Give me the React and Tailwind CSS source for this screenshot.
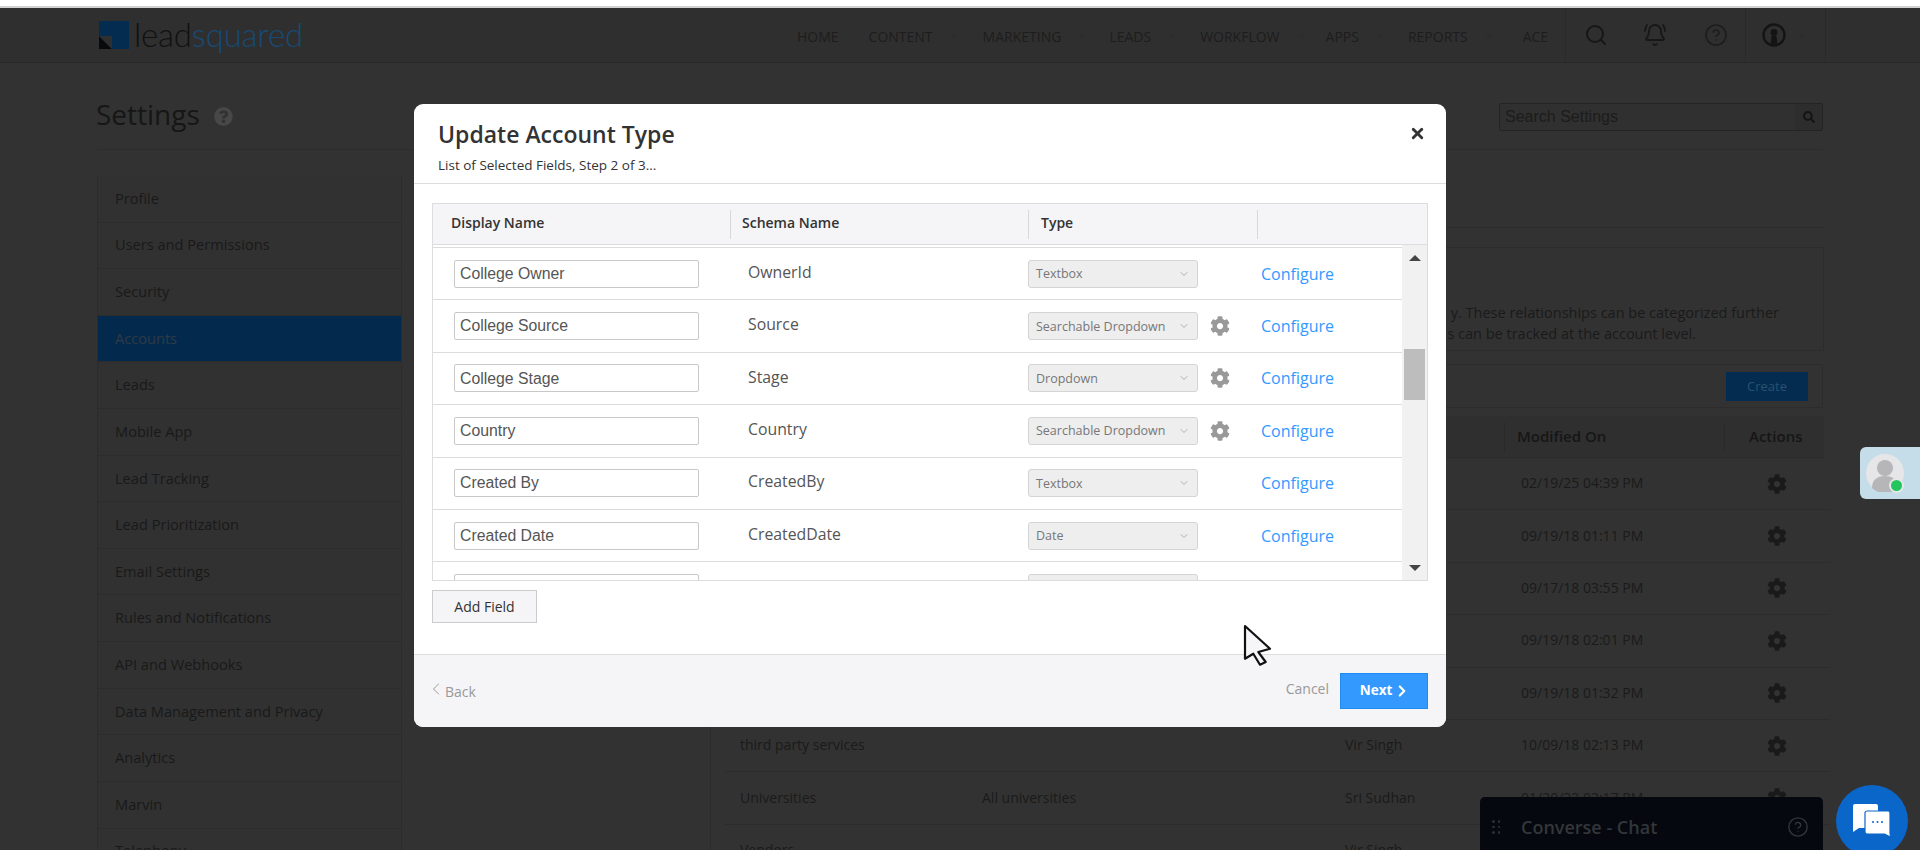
import React from "react";
import { ChevronDown, ChevronLeft, ChevronRight, BellRing, CircleHelp, Search, X } from "lucide-react";
import { FaCog, FaSearch, FaQuestionCircle } from "react-icons/fa";

const font = "font-['Open_Sans','Noto_Sans',sans-serif]";

const menu = ["Profile","Users and Permissions","Security","Accounts","Leads","Mobile App","Lead Tracking","Lead Prioritization","Email Settings","Rules and Notifications","API and Webhooks","Data Management and Privacy","Analytics","Marvin","Telephony"];

const nav = [
  { t: "HOME", ml: "ml-0", chev: false },
  { t: "CONTENT", ml: "ml-[30px]", chev: true },
  { t: "MARKETING", ml: "ml-[24px]", chev: true },
  { t: "LEADS", ml: "ml-[22px]", chev: true },
  { t: "WORKFLOW", ml: "ml-[23px]", chev: true },
  { t: "APPS", ml: "ml-[20px]", chev: true },
  { t: "REPORTS", ml: "ml-[23px]", chev: true },
  { t: "ACE", ml: "ml-[29px]", chev: false },
];

const rows = [
  { n: "College Owner", s: "OwnerId", ty: "Textbox", g: false },
  { n: "College Source", s: "Source", ty: "Searchable Dropdown", g: true },
  { n: "College Stage", s: "Stage", ty: "Dropdown", g: true },
  { n: "Country", s: "Country", ty: "Searchable Dropdown", g: true },
  { n: "Created By", s: "CreatedBy", ty: "Textbox", g: false },
  { n: "Created Date", s: "CreatedDate", ty: "Date", g: false },
  { n: "", s: "CreatedOn", ty: "", g: false },
];

const back = [
  { d: "02/19/25 04:39 PM" },
  { d: "09/19/18 01:11 PM" },
  { d: "09/17/18 03:55 PM" },
  { d: "09/19/18 02:01 PM" },
  { d: "09/19/18 01:32 PM" },
  { n: "third party services", o: "Vir Singh", d: "10/09/18 02:13 PM" },
  { n: "Universities", a: "All universities", o: "Sri Sudhan", d: "01/20/23 02:17 PM" },
  { n: "Vendors", o: "Vir Singh", d: "" },
];

function Row({ r }) {
  return (
    <div className="flex h-[52.4px] shrink-0 items-center border-b border-[#dcdcdc]">
      <div className="ml-[21px] flex h-[28px] w-[245px] shrink-0 items-center rounded-[2px] border border-[#c8c8c8] bg-white pl-[5px] font-['Liberation_Sans',sans-serif] text-[15.8px] text-[#555]">
        {r.n}
      </div>
      <div className="ml-[49px] w-[280px] shrink-0 -translate-y-[1px] text-[15.8px] text-[#555]">{r.s}</div>
      <div className="flex h-[28px] w-[170px] shrink-0 items-center justify-between rounded-[3px] border border-[#d4d4d4] bg-[#eeeeee] pl-[7px] pr-[7px] text-[12.5px] text-[#777]">
        <span className="translate-y-[1px]">{r.ty}</span>
        <ChevronDown size={12} className="text-[#b0b0b0]" />
      </div>
      <div className="ml-[12px] flex w-[20px] shrink-0 justify-center">
        {r.g && <FaCog size={20} className="text-[#999]" />}
      </div>
      <a className="ml-[31px] text-[16px] text-[#3399ff]">Configure</a>
    </div>
  );
}

export default function App() {
  return (
    <div className={`relative h-[850px] w-[1920px] overflow-hidden bg-white ${font}`}>
      <div className="h-[6px] bg-white" />
      <div className="h-[2px] bg-[#d2d2d2]" />

      <div className="h-[842px] overflow-hidden bg-[#323232]">
        {/* top nav */}
        <header className="flex h-[55px] items-center border-b border-[#282828] bg-[#2f2f2f] text-[#1d1d1d]">
          <div className="flex w-[797px] shrink-0 items-center pl-[99px]">
            <div className="relative h-[28px] w-[30px] bg-[#042c50]">
              <svg viewBox="0 0 30 28" className="absolute inset-0 h-full w-full">
                <polygon points="0,15 13,28 0,28" fill="#0a0a0a" />
                <polygon points="0,15 13,15 13,28" fill="#2f2f2f" />
              </svg>
            </div>
            <div className="ml-[5px] -translate-y-[1px] font-['Lato',sans-serif] text-[33px] leading-none font-light tracking-[-0.2px]">
              <span className="text-[#111]">lead</span>
              <span className="text-[#184a75]">squared</span>
            </div>
          </div>
          <nav className="flex w-[768px] shrink-0 translate-y-[1px] items-center text-[14px]">
            {nav.map((n) => (
              <div key={n.t} className={`flex items-center ${n.ml}`}>
                <span>{n.t}</span>
                {n.chev && <ChevronDown size={10} className="ml-[16px] text-[#282828]" />}
              </div>
            ))}
          </nav>
          <div className="flex h-full w-[180px] shrink-0 items-center border-l border-[#2a2a2a] pl-[18px]">
            <Search size={24} strokeWidth={2} className="text-[#171717]" />
            <BellRing size={24} strokeWidth={1.8} className="ml-[35px] text-[#171717]" />
            <CircleHelp size={24} strokeWidth={1.6} className="ml-[37px] text-[#1d1d1d]" />
          </div>
          <div className="flex h-full w-[81px] shrink-0 items-center border-x border-[#2a2a2a] pl-[16px]">
            <svg viewBox="0 0 24 24" className="h-[24px] w-[24px]">
              <circle cx="12" cy="12" r="10.5" fill="none" stroke="#141414" strokeWidth="2.4" />
              <circle cx="12" cy="9.5" r="3.4" fill="#141414" />
              <path d="M9.5 13h5l1 9h-7z" fill="#141414" />
            </svg>
            <ChevronDown size={9} className="ml-[12px] text-[#282828]" />
          </div>
        </header>

        {/* page body */}
        <div className="pl-[97px]">
          <div className="flex h-[87px] w-[1726px] items-start justify-between border-b border-[#2c2c2c] pt-[40px]">
            <div className="flex items-center">
              <h1 className="-ml-[1px] -mt-[4px] text-[28px] leading-[30px] font-normal text-[#161616]">Settings</h1>
              <FaQuestionCircle size={19} className="ml-[14px] mt-[1px] text-[#484848]" />
            </div>
            <div className="flex h-[28px] w-[324px] items-center rounded-[2px] border border-[#242424] bg-[#303030] pl-[5px] font-['Liberation_Sans',sans-serif] text-[16px] text-[#1c1c1c]">
              <span className="flex-1">Search Settings</span>
              <div className="flex h-full w-[27px] items-center justify-center border-l border-[#2c2c2c] bg-[#2d2d2d]">
                <FaSearch size={12} className="text-[#141414]" />
              </div>
            </div>
          </div>

          <div className="mt-[26px] flex">
            {/* sidebar */}
            <aside className="w-[305px] shrink-0 border-x border-[#2c2c2c] bg-[#313131] text-[14.6px] text-[#191919]">
              {menu.map((m) => (
                <div
                  key={m}
                  className={`flex h-[46.62px] items-center border-b border-[#2c2c2c] pl-[17px] ${m === "Accounts" ? "bg-[#032a4d] text-[#2f3a45]" : ""}`}
                >
                  {m}
                </div>
              ))}
            </aside>

            {/* main, mostly behind the dialog */}
            <main className="ml-[308px] w-[1120px] shrink-0 border-l border-[#2c2c2c] text-[14.5px] text-[#1a1a1a]">
              <div className="h-[52px] w-[1113px] border-b border-[#2c2c2c]" />
              <div className="mt-[19px] h-[104px] w-[1113px] border border-[#2c2c2c] pt-[54px] leading-[21px]">
                <div className="pr-[44px] text-right">y. These relationships can be categorized further</div>
                <div className="pr-[127px] text-right">s can be tracked at the account level.</div>
              </div>
              <div className="mt-[13px] flex h-[44px] w-[1112px] items-center justify-end border border-[#2c2c2c] pr-[14px]">
                <div className="flex h-[29px] w-[82px] items-center justify-center bg-[#032c50] pt-[1px] text-[13px] text-[#2a5270]">Create</div>
              </div>
              <div className="ml-[14px] mt-[8px] w-[1105px]">
                <div className="flex h-[42px] w-[1099px] items-center border-b border-[#2c2c2c] bg-[#2f2f2f] text-[15px] font-semibold text-[#161616]">
                  <div className="h-[30px] w-[780px] shrink-0 border-r border-[#2a2a2a]" />
                  <div className="flex h-[30px] w-[220px] shrink-0 items-center border-r border-[#2a2a2a] pl-[12px]">Modified On</div>
                  <div className="pl-[24px]">Actions</div>
                </div>
                {back.map((b, i) => (
                  <div key={i} className="flex h-[52.4px] items-center border-b border-[#2c2c2c] text-[14px]">
                    <div className="ml-[15px] w-[242px] shrink-0 -translate-y-[1px]">{b.n}</div>
                    <div className="w-[363px] shrink-0 -translate-y-[1px]">{b.a}</div>
                    <div className="w-[176px] shrink-0 -translate-y-[1px]">{b.o}</div>
                    <div className="w-[246px] shrink-0 -translate-y-[1px]">{b.d}</div>
                    {i < 7 && <FaCog size={20} className="text-[#1a1a1a]" />}
                  </div>
                ))}
              </div>
            </main>
          </div>
        </div>
      </div>

      {/* avatar tab */}
      <div className="absolute left-[1860px] top-[447px] flex h-[52px] w-[60px] items-center rounded-l-[6px] bg-[#c4dde8] pl-[6px]">
        <div className="relative h-[38px] w-[38px]">
          <svg viewBox="0 0 38 38" className="h-full w-full">
            <circle cx="19" cy="19" r="19" fill="#e6e6e9" />
            <circle cx="19" cy="14" r="8" fill="#b6b6b8" />
            <path d="M6 34c0-9 6-12 13-12s13 3 13 12a19 19 0 0 1-26 0z" fill="#b6b6b8" />
          </svg>
          <span className="absolute left-[23px] top-[24px] h-[15px] w-[15px] rounded-full border-2 border-[#e6e6e9] bg-[#22c55e]" />
        </div>
      </div>

      {/* chat dock */}
      <div className="absolute left-[1480px] top-[797px] flex h-[53px] w-[343px] items-center rounded-t-[5px] bg-[#05080e] pl-[12px] pr-[14px] pt-[7px]">
        <div className="grid grid-cols-2 gap-[3px]">
          {[0, 1, 2, 3, 4, 5].map((i) => (
            <span key={i} className="h-[2.5px] w-[2.5px] rounded-full bg-[#2c2f33]" />
          ))}
        </div>
        <span className="ml-[21px] flex-1 text-[18px] font-semibold text-[#33363a]">Converse - Chat</span>
        <CircleHelp size={22} strokeWidth={1.5} className="text-[#33363a]" />
      </div>
      <div className="absolute left-[1836px] top-[785px] flex h-[72px] w-[72px] items-center justify-center rounded-full bg-[#0a66c8]">
        <svg viewBox="0 0 40 34" className="h-[34px] w-[40px]">
          <path d="M1 2a2 2 0 0 1 2-2h21a2 2 0 0 1 2 2v20a2 2 0 0 1-2 2H7l-6 4z" fill="#fff" />
          <path d="M13 9a2 2 0 0 1 2-2h21a2 2 0 0 1 2 2v20l.5 4-6-3H15a2 2 0 0 1-2-2z" fill="#fff" stroke="#0a66c8" strokeWidth="1.2" />
          <circle cx="21" cy="18" r="1" fill="#0a66c8" />
          <circle cx="25.5" cy="18" r="1" fill="#0a66c8" />
          <circle cx="30" cy="18" r="1" fill="#0a66c8" />
        </svg>
      </div>

      {/* dialog */}
      <div className="absolute left-[414px] top-[104px] flex h-[623px] w-[1032px] flex-col overflow-hidden rounded-[9px] bg-white">
        <div className="relative h-[80px] shrink-0 border-b border-[#dddddd] pl-[24px]">
          <h2 className="pt-[14px] text-[23px] leading-[32px] font-semibold text-[#333]">Update Account Type</h2>
          <p className="mt-[6px] text-[13.5px] leading-[18px] text-[#333]">List of Selected Fields, Step 2 of 3...</p>
          <button className="absolute right-[20px] top-[21px] text-[#333]">
            <X size={17} strokeWidth={4} />
          </button>
        </div>

        <div className="flex-1 px-[18px] pt-[19px]">
          <div className="flex h-[378px] w-[996px] flex-col overflow-hidden border border-[#dddddd]">
            <div className="flex h-[41px] shrink-0 items-center border-b border-[#dddddd] bg-[#f5f5f7] text-[14px] font-semibold text-[#333]">
              <div className="flex h-[29px] w-[298px] shrink-0 items-center border-r border-[#d8d8d8] pb-[3px] pl-[18px]">Display Name</div>
              <div className="flex h-[29px] w-[298px] shrink-0 items-center border-r border-[#d8d8d8] pb-[3px] pl-[11px]">Schema Name</div>
              <div className="flex h-[29px] w-[229px] shrink-0 items-center border-r border-[#d8d8d8] pb-[3px] pl-[12px]">Type</div>
            </div>
            <div className="flex min-h-0 flex-1">
              <div className="min-w-0 flex-1 overflow-hidden pt-[2px]">
                <div className="border-t border-[#dcdcdc]">
                  {rows.map((r) => (
                    <Row key={r.s} r={r} />
                  ))}
                </div>
              </div>
              <div className="relative w-[25px] shrink-0 bg-[#f1f1f1]">
                <div className="mx-auto mt-[10px] h-0 w-0 border-x-[6px] border-b-[6px] border-x-transparent border-b-[#444]" />
                <div className="absolute left-[2px] top-[104px] h-[51px] w-[21px] bg-[#bdbdbd]" />
                <div className="absolute bottom-[9px] left-[7px] h-0 w-0 border-x-[6px] border-t-[6px] border-x-transparent border-t-[#444]" />
              </div>
            </div>
          </div>
          <button className="mt-[9px] flex h-[33px] w-[105px] items-center justify-center border border-[#cccccc] bg-[#f5f5f7] text-[14px] font-medium text-[#333]">
            Add Field
          </button>
        </div>

        <div className="flex h-[73px] shrink-0 items-center border-t border-[#dddddd] bg-[#f5f5f7] pl-[18px] pr-[18px]">
          <div className="flex items-center text-[14px] text-[#999]">
            <ChevronLeft size={20} strokeWidth={1.2} className="-ml-[6px] -mt-[4px]" />
            <span className="-ml-[1px] mt-[1px]">Back</span>
          </div>
          <div className="ml-auto -mt-[5px] text-[14px] text-[#999]">Cancel</div>
          <button className="-mt-[1px] ml-[11px] flex h-[36px] w-[88px] items-center justify-center border border-[#1e8cf0] bg-[#3399ff] pl-[3px] text-[13.5px] font-bold text-white">
            Next
            <ChevronRight size={18} strokeWidth={3} className="ml-[1px]" />
          </button>
        </div>
      </div>

      {/* mouse pointer */}
      <svg viewBox="-2 -2 30 44" className="absolute left-[1243px] top-[624px] h-[44px] w-[30px]">
        <path d="M0 0L25 22.7L13.3 26L20.7 36L15 38.7L8.3 27.7L0 32.7Z" fill="#f6f6f8" stroke="#111" strokeWidth="2.2" strokeLinejoin="round" />
      </svg>
    </div>
  );
}
